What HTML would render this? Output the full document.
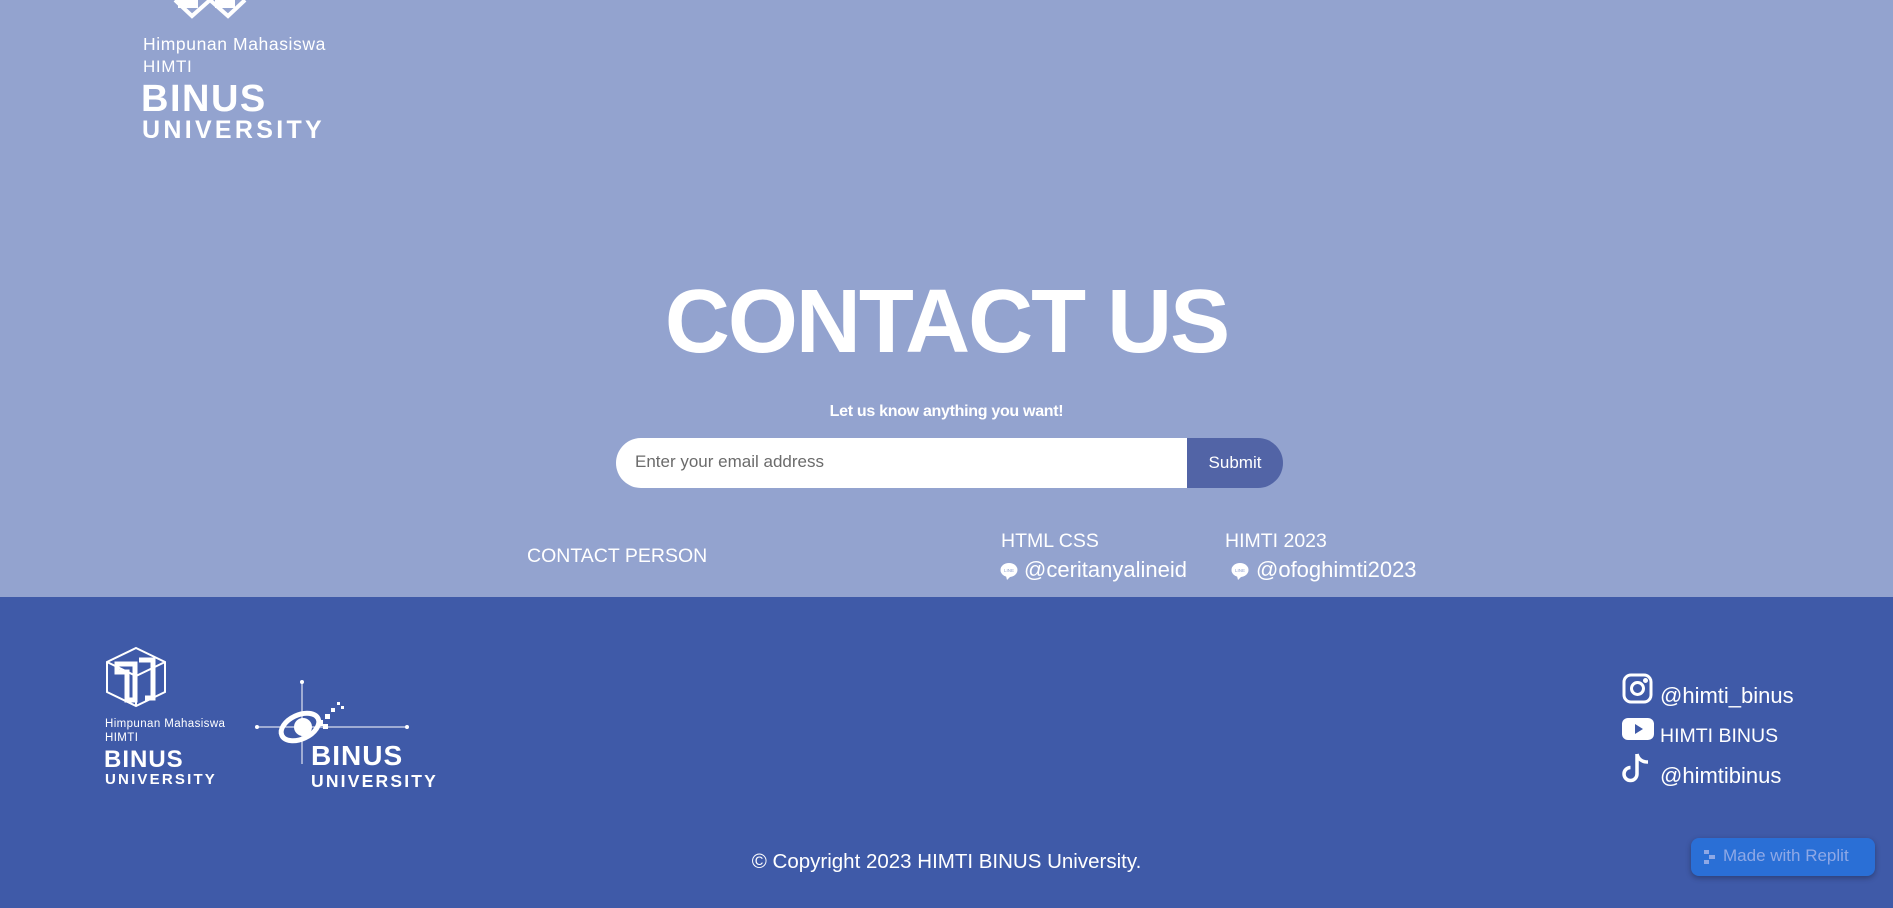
<!DOCTYPE html>
<html><head><meta charset="utf-8"><style>
*{margin:0;padding:0;box-sizing:border-box}
body{width:1893px;height:908px;overflow:hidden;font-family:"Liberation Sans",sans-serif;color:#fff;position:relative;background:#93a3cf}
.top{position:absolute;left:0;top:0;width:1893px;height:597px;background:#93a3cf}
.foot{position:absolute;left:0;top:597px;width:1893px;height:311px;background:#3f5aa8}
.a{position:absolute;white-space:nowrap}
</style></head><body>
<div class="top"></div>
<div class="foot"></div>

<!-- top logo -->
<svg class="a" style="left:170px;top:0" width="80" height="20" viewBox="0 0 80 20"><path d="M5 0 L22 16 L40 0 M40 0 L58 16 L75 0" stroke="#fff" stroke-width="4" fill="none"/><path d="M8 0h20v8h-20zM45 0h20v8h-20z" fill="#fff"/></svg>
<div class="a" style="left:143px;top:34px;font-size:17.5px;letter-spacing:0.6px">Himpunan Mahasiswa</div>
<div class="a" style="left:143px;top:57px;font-size:17px;letter-spacing:0.6px">HIMTI</div>
<div class="a" style="left:141px;top:80px;font-size:38px;font-weight:bold;line-height:38px;letter-spacing:1.5px">BINUS</div>
<div class="a" style="left:142px;top:118px;font-size:25px;font-weight:bold;letter-spacing:3.3px;line-height:25px">UNIVERSITY</div>

<div class="a" style="left:0;width:1893px;text-align:center;top:272px;font-size:90px;font-weight:bold;letter-spacing:-2px;line-height:100px">CONTACT US</div>
<div class="a" style="left:0;width:1893px;text-align:center;top:403px;font-size:16px;font-weight:bold;letter-spacing:-0.3px">Let us know anything you want!</div>

<div class="a" style="left:616px;top:438px;width:571px;height:50px;background:#fff;border-radius:25px 0 0 25px"></div>
<div class="a" style="left:635px;top:452px;font-size:17px;color:#6b6b6b">Enter your email address</div>
<div class="a" style="left:1187px;top:438px;width:96px;height:50px;background:#5264a6;border-radius:0 25px 25px 0;text-align:center;line-height:50px;font-size:17px">Submit</div>

<div class="a" style="left:527px;top:545px;font-size:19.5px">CONTACT PERSON</div>
<div class="a" style="left:1001px;top:530px;font-size:19.5px">HTML CSS</div>
<div class="a" style="left:1225px;top:530px;font-size:19.5px">HIMTI 2023</div>
<svg class="a" style="left:1000px;top:562px" width="18" height="18" viewBox="0 0 18 18"><ellipse cx="9" cy="8" rx="8.5" ry="7" fill="#fff"/><path d="M6 14 L7 18 L11 14z" fill="#fff"/><text x="9" y="10" font-size="4.5" text-anchor="middle" fill="#93a3cf" font-family="Liberation Sans">LINE</text></svg>
<div class="a" style="left:1024px;top:557px;font-size:22px">@ceritanyalineid</div>
<svg class="a" style="left:1231px;top:562px" width="18" height="18" viewBox="0 0 18 18"><ellipse cx="9" cy="8" rx="8.5" ry="7" fill="#fff"/><path d="M6 14 L7 18 L11 14z" fill="#fff"/><text x="9" y="10" font-size="4.5" text-anchor="middle" fill="#93a3cf" font-family="Liberation Sans">LINE</text></svg>
<div class="a" style="left:1256px;top:557px;font-size:22px">@ofoghimti2023</div>

<!-- footer logos -->
<svg class="a" style="left:105px;top:646px" width="62" height="62" viewBox="0 0 62 62" fill="none" stroke="#fff" stroke-width="2"><path d="M31 2 L60 16 V46 L31 60 L2 46 V16z M2 16 L31 30 L60 16 M31 30 V60"/><path d="M12 18 h18 v36 h-8 v-28 h-10z M34 14 h14 v38 h-8" stroke-width="5"/></svg>
<div class="a" style="left:105px;top:718px;font-size:11.5px;letter-spacing:0.4px">Himpunan Mahasiswa</div>
<div class="a" style="left:105px;top:732px;font-size:11.5px;letter-spacing:0.4px">HIMTI</div>
<div class="a" style="left:104px;top:748px;font-size:24px;font-weight:bold;line-height:24px;letter-spacing:1px">BINUS</div>
<div class="a" style="left:105px;top:772px;font-size:15px;font-weight:bold;letter-spacing:2.2px;line-height:16px">UNIVERSITY</div>

<svg class="a" style="left:255px;top:680px" width="160" height="84" viewBox="0 0 160 84"><path d="M2 47 H152 M47 2 V84" stroke="#fff" stroke-width="1"/><circle cx="2" cy="47" r="2" fill="#fff"/><circle cx="152" cy="47" r="2" fill="#fff"/><circle cx="47" cy="2" r="2" fill="#fff"/><ellipse cx="45" cy="47" rx="20" ry="12" transform="rotate(-25 45 47)" fill="none" stroke="#fff" stroke-width="5"/><circle cx="48" cy="47" r="9" fill="#fff"/><path d="M62 40h6v6h-6zM70 34h5v5h-5zM76 28h4v4h-4zM68 44h5v5h-5zM82 22h3v3h-3zM86 26h3v3h-3z" fill="#fff"/></svg>
<div class="a" style="left:311px;top:742px;font-size:28px;font-weight:bold;line-height:28px;letter-spacing:1px">BINUS</div>
<div class="a" style="left:311px;top:772px;font-size:17.5px;font-weight:bold;letter-spacing:2.2px;line-height:18px">UNIVERSITY</div>

<!-- social -->
<svg class="a" style="left:1622px;top:673px" width="31" height="31" viewBox="0 0 31 31" fill="none" stroke="#fff" stroke-width="3"><rect x="2" y="2" width="27" height="27" rx="7"/><circle cx="15.5" cy="15.5" r="6"/><circle cx="23.5" cy="7.5" r="1" fill="#fff"/></svg>
<div class="a" style="left:1660px;top:683px;font-size:22px">@himti_binus</div>
<svg class="a" style="left:1622px;top:718px" width="32" height="22" viewBox="0 0 32 22"><rect x="0" y="0" width="32" height="22" rx="6" fill="#fff"/><path d="M13 6 L21 11 L13 16z" fill="#3f5aa8"/></svg>
<div class="a" style="left:1660px;top:725px;font-size:19.5px">HIMTI BINUS</div>
<svg class="a" style="left:1622px;top:752px" width="28" height="32" viewBox="0 0 28 32" fill="none" stroke="#fff" stroke-width="3.5"><path d="M15 2 V22 A6.5 6.5 0 1 1 8.5 15.5 M15 2 Q17 10 26 10"/></svg>
<div class="a" style="left:1660px;top:763px;font-size:22px">@himtibinus</div>

<div class="a" style="left:0;width:1893px;text-align:center;top:850px;font-size:20.5px">© Copyright 2023 HIMTI BINUS University.</div>

<div class="a" style="left:1691px;top:838px;width:184px;height:38px;background:#2a6fd6;border-radius:8px;box-shadow:0 2px 6px rgba(0,0,0,.3)"></div>
<svg class="a" style="left:1704px;top:850px" width="12" height="14" viewBox="0 0 12 14" fill="#8ea8e6"><rect x="0" y="0" width="5" height="4"/><rect x="5" y="5" width="6" height="4"/><rect x="0" y="10" width="5" height="4"/></svg>
<div class="a" style="left:1723px;top:846px;font-size:17px;color:#8ea8e6">Made with Replit</div>
</body></html>
